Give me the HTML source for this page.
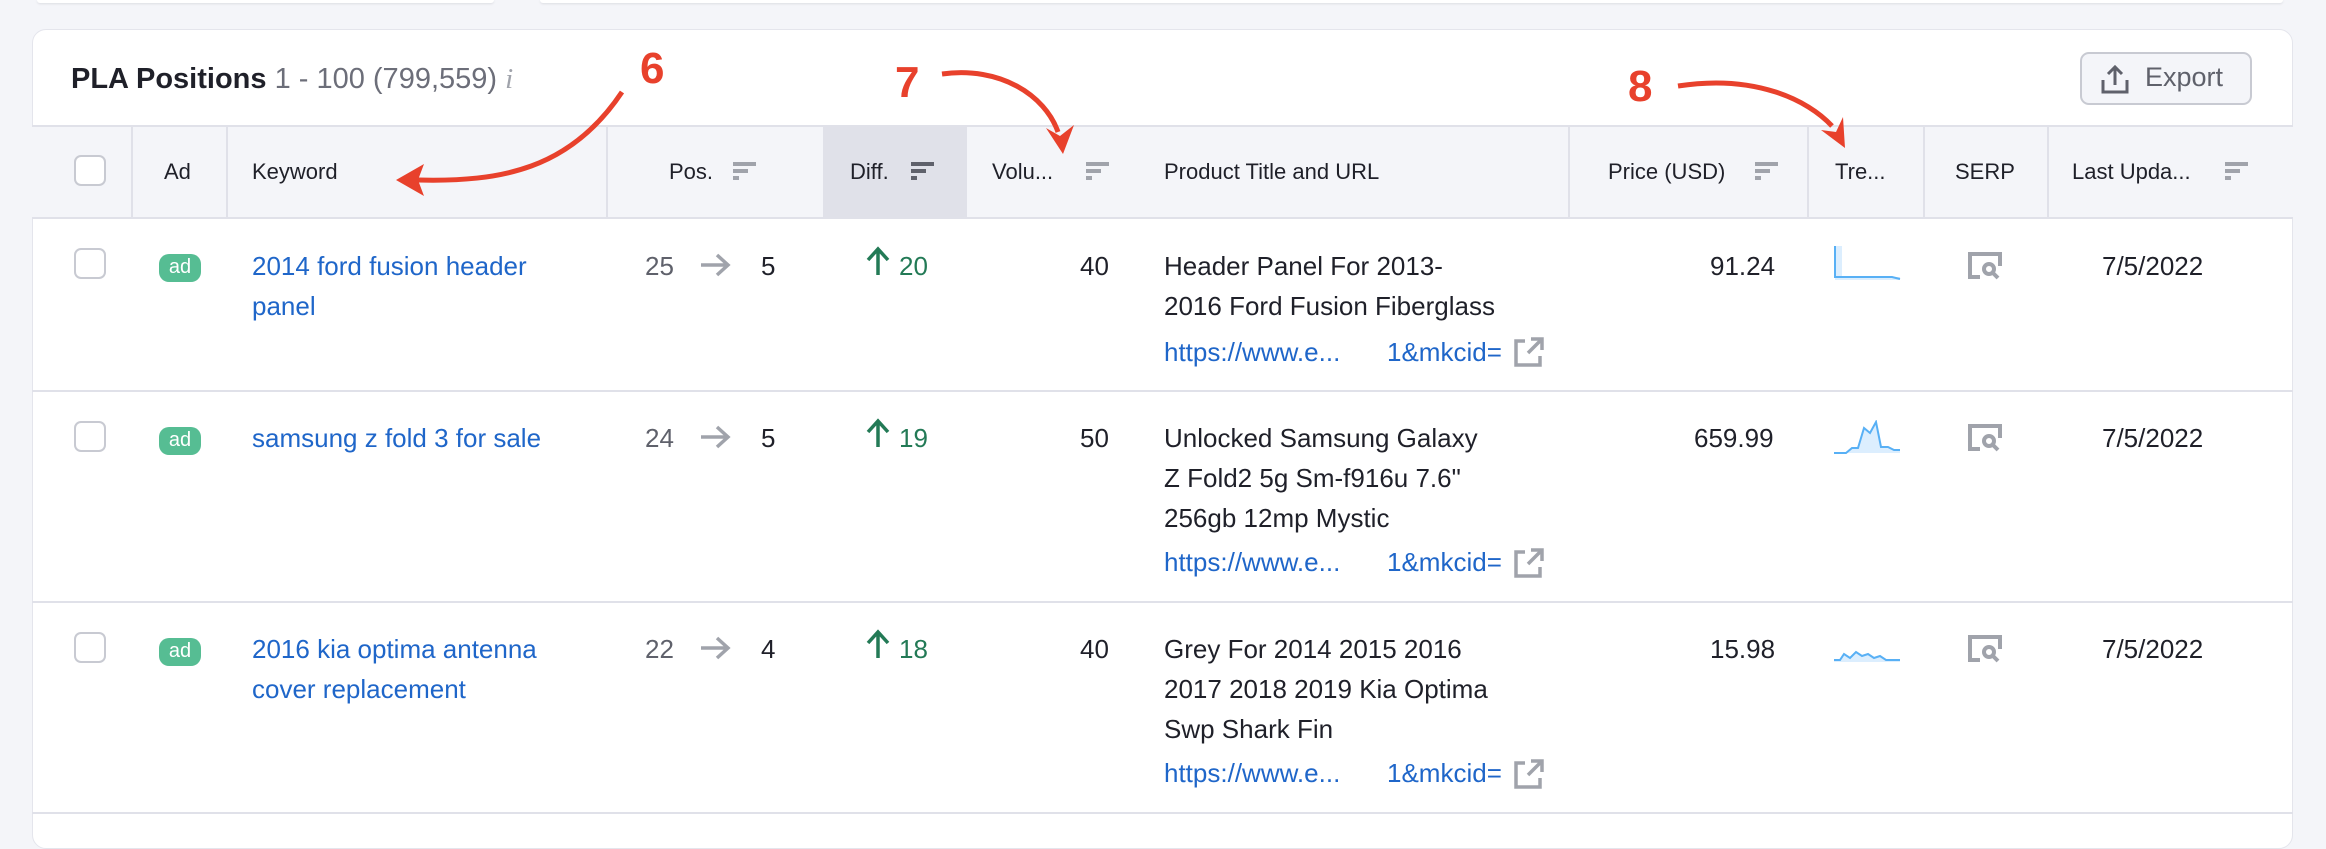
<!DOCTYPE html>
<html><head><meta charset="utf-8"><style>
*{margin:0;padding:0;box-sizing:border-box}
body{width:2326px;height:830px;background:#f4f5f9;position:relative;overflow:hidden;font-family:"Liberation Sans",Arial,sans-serif;color:#1f2029}
.a{position:absolute;white-space:nowrap}
.card{position:absolute;left:32px;top:29px;width:2261px;height:820px;background:#fff;border-radius:14px;border:1px solid #e4e5ec;overflow:hidden}
.hdr{position:absolute;left:32px;top:125px;width:2261px;height:94px;background:#f4f5f9;border-top:2px solid #e0e1e9;border-bottom:2px solid #e0e1e9}
.vl{position:absolute;top:125px;height:94px;width:2px;background:#e0e1e9}
.ht{position:absolute;top:159px;font-size:22px;color:#1f2029;white-space:nowrap}
.hl{position:absolute;left:32px;width:2261px;height:2px;background:#e0e1e9}
.t{position:absolute;font-size:26px;line-height:40px;white-space:nowrap}
.lnk{color:#1f66c9}
.cb{position:absolute;width:32px;height:31px;border:2px solid #c8cad2;border-radius:7px;background:#fff}
.ad{position:absolute;width:42px;height:28px;background:#56bd93;border-radius:10px;color:#fff;font-size:20px;line-height:27px;text-align:center}
.g{color:#5f616b}
.grn{color:#237a56}
.num{position:absolute;font-weight:bold;color:#e8412c;font-size:44px;font-family:"Liberation Sans",sans-serif}
.clip{overflow:hidden;width:116px}
</style></head><body>
<div class="a" style="left:37px;top:0;width:457px;height:3px;background:#fff;border-radius:0 0 6px 6px;box-shadow:0 1px 2px #dcdde3"></div>
<div class="a" style="left:540px;top:0;width:1743px;height:3px;background:#fff;border-radius:0 0 6px 6px;box-shadow:0 1px 2px #dcdde3"></div>
<div class="card"></div>
<div class="a" style="left:71px;top:63px;font-size:29px;font-weight:bold;color:#1f2029">PLA Positions <span style="font-weight:normal;color:#6c6e79">1 - 100 (799,559)</span> <span style="font-weight:normal;color:#a0a3ab;font-style:italic;font-family:'Liberation Serif',serif">i</span></div>
<div class="a" style="left:2080px;top:52px;width:172px;height:53px;border:2px solid #c8cad2;border-radius:9px;background:#f4f5f9"></div>
<svg class="a" style="left:2100px;top:63px" width="30" height="32" viewBox="0 0 30 32"><path d="M15 22V4M8 11l7-7 7 7M3 17v12h24V17" fill="none" stroke="#5f616b" stroke-width="3"/></svg>
<div class="a" style="left:2145px;top:62px;font-size:27px;color:#5f616b">Export</div>

<div class="hdr"></div>
<div class="a" style="left:823px;top:127px;width:144px;height:90px;background:#e0e1e9"></div>
<div class="vl" style="left:131px"></div><div class="vl" style="left:226px"></div><div class="vl" style="left:606px"></div>
<div class="vl" style="left:1568px"></div><div class="vl" style="left:1807px"></div><div class="vl" style="left:1923px"></div><div class="vl" style="left:2047px"></div>
<div class="cb" style="left:74px;top:155px"></div>
<div class="ht" style="left:164px">Ad</div>
<div class="ht" style="left:252px">Keyword</div>
<div class="ht" style="left:669px">Pos.</div>
<div class="ht" style="left:850px">Diff.</div>
<div class="ht" style="left:992px">Volu...</div>
<div class="ht" style="left:1164px">Product Title and URL</div>
<div class="ht" style="left:1608px">Price (USD)</div>
<div class="ht" style="left:1835px">Tre...</div>
<div class="ht" style="left:1955px">SERP</div>
<div class="ht" style="left:2072px">Last Upda...</div>
<svg class="a" style="left:733px;top:161px" width="24" height="20"><path d="M0 3h23M0 10h15M0 17h6" stroke="#a0a3ab" stroke-width="4"/></svg>
<svg class="a" style="left:911px;top:161px" width="24" height="20"><path d="M0 3h23M0 10h15M0 17h6" stroke="#5f616b" stroke-width="4"/></svg>
<svg class="a" style="left:1086px;top:161px" width="24" height="20"><path d="M0 3h23M0 10h15M0 17h6" stroke="#a0a3ab" stroke-width="4"/></svg>
<svg class="a" style="left:1755px;top:161px" width="24" height="20"><path d="M0 3h23M0 10h15M0 17h6" stroke="#a0a3ab" stroke-width="4"/></svg>
<svg class="a" style="left:2225px;top:161px" width="24" height="20"><path d="M0 3h23M0 10h15M0 17h6" stroke="#a0a3ab" stroke-width="4"/></svg>

<div class="hl" style="top:390px"></div>
<div class="hl" style="top:601px"></div>
<div class="hl" style="top:812px"></div>

<!-- row1 -->
<div class="cb" style="left:74px;top:248px"></div>
<div class="ad" style="left:159px;top:254px">ad</div>
<div class="t lnk" style="left:252px;top:246px">2014 ford fusion header<br>panel</div>
<div class="t g" style="left:645px;top:246px">25</div><div class="t" style="left:761px;top:246px">5</div>
<div class="t grn" style="left:899px;top:246px">20</div>
<div class="t" style="left:1080px;top:246px">40</div>
<div class="t" style="left:1164px;top:246px">Header Panel For 2013-<br>2016 Ford Fusion Fiberglass</div>
<div class="t lnk" style="left:1164px;top:332px">https://www.e...</div><div class="t lnk clip" style="left:1387px;top:332px">1&amp;mkcid=</div>
<div class="t" style="left:1710px;top:246px">91.24</div>
<svg class="a" style="left:1834px;top:246px" width="68" height="36"><path d="M1 0V34H66V31H8V0Z" fill="#dceefe"/><path d="M1 0V31H58L66 33" fill="none" stroke="#58b0f5" stroke-width="2"/></svg>
<div class="t" style="left:2102px;top:246px">7/5/2022</div>

<!-- row2 -->
<div class="cb" style="left:74px;top:421px"></div>
<div class="ad" style="left:159px;top:427px">ad</div>
<div class="t lnk" style="left:252px;top:418px">samsung z fold 3 for sale</div>
<div class="t g" style="left:645px;top:418px">24</div><div class="t" style="left:761px;top:418px">5</div>
<div class="t grn" style="left:899px;top:418px">19</div>
<div class="t" style="left:1080px;top:418px">50</div>
<div class="t" style="left:1164px;top:418px">Unlocked Samsung Galaxy<br>Z Fold2 5g Sm-f916u 7.6"<br>256gb 12mp Mystic</div>
<div class="t lnk" style="left:1164px;top:542px">https://www.e...</div><div class="t lnk clip" style="left:1387px;top:542px">1&amp;mkcid=</div>
<div class="t" style="left:1694px;top:418px">659.99</div>
<svg class="a" style="left:1834px;top:420px" width="68" height="36"><path d="M0 33H12L18 28H24L30 8L36 13L42 2L47 27H54L60 30H66V33Z" fill="#dceefe"/><path d="M0 33H12L18 28H24L30 8L36 13L42 2L47 27H54L60 30H66" fill="none" stroke="#58b0f5" stroke-width="2"/></svg>
<div class="t" style="left:2102px;top:418px">7/5/2022</div>

<!-- row3 -->
<div class="cb" style="left:74px;top:632px"></div>
<div class="ad" style="left:159px;top:638px">ad</div>
<div class="t lnk" style="left:252px;top:629px">2016 kia optima antenna<br>cover replacement</div>
<div class="t g" style="left:645px;top:629px">22</div><div class="t" style="left:761px;top:629px">4</div>
<div class="t grn" style="left:899px;top:629px">18</div>
<div class="t" style="left:1080px;top:629px">40</div>
<div class="t" style="left:1164px;top:629px">Grey For 2014 2015 2016<br>2017 2018 2019 Kia Optima<br>Swp Shark Fin</div>
<div class="t lnk" style="left:1164px;top:753px">https://www.e...</div><div class="t lnk clip" style="left:1387px;top:753px">1&amp;mkcid=</div>
<div class="t" style="left:1710px;top:629px">15.98</div>
<svg class="a" style="left:1834px;top:640px" width="68" height="24"><path d="M0 20H6L10 14L16 18L22 12L28 16L34 14L40 18L46 16L52 20H66V22H0Z" fill="#dceefe"/><path d="M0 20H6L10 14L16 18L22 12L28 16L34 14L40 18L46 16L52 20H66" fill="none" stroke="#58b0f5" stroke-width="2"/></svg>
<div class="t" style="left:2102px;top:629px">7/5/2022</div>

<svg class="a" style="left:0;top:0" width="2326" height="830">
<g fill="none" stroke="#a0a3ab" stroke-width="3.5">
<path d="M701 265H727M717 255L728 265L717 275"/>
<path d="M701 437H727M717 427L728 437L717 447"/>
<path d="M701 648H727M717 638L728 648L717 658"/>
</g>
<g fill="none" stroke="#237a56" stroke-width="3.5">
<path d="M878 275V250M868 260L878 249L888 260"/>
<path d="M878 447V422M868 432L878 421L888 432"/>
<path d="M878 658V633M868 643L878 632L888 643"/>
</g>
</svg>

<svg class="a" style="left:1968px;top:252px" width="34" height="28"><g fill="none" stroke="#a0a3ab" stroke-width="4"><path d="M12 25H2V2H32V14"/><circle cx="21" cy="17" r="5"/><path d="M25 21l5 5"/></g></svg>
<svg class="a" style="left:1968px;top:424px" width="34" height="28"><g fill="none" stroke="#a0a3ab" stroke-width="4"><path d="M12 25H2V2H32V14"/><circle cx="21" cy="17" r="5"/><path d="M25 21l5 5"/></g></svg>
<svg class="a" style="left:1968px;top:635px" width="34" height="28"><g fill="none" stroke="#a0a3ab" stroke-width="4"><path d="M12 25H2V2H32V14"/><circle cx="21" cy="17" r="5"/><path d="M25 21l5 5"/></g></svg>
<svg class="a" style="left:1514px;top:337px" width="30" height="30"><g fill="none" stroke="#a0a3ab" stroke-width="3.5"><path d="M11 4H2V28H26V19"/><path d="M14 16L27 3M17 2H28V13"/></g></svg>
<svg class="a" style="left:1514px;top:548px" width="30" height="30"><g fill="none" stroke="#a0a3ab" stroke-width="3.5"><path d="M11 4H2V28H26V19"/><path d="M14 16L27 3M17 2H28V13"/></g></svg>
<svg class="a" style="left:1514px;top:759px" width="30" height="30"><g fill="none" stroke="#a0a3ab" stroke-width="3.5"><path d="M11 4H2V28H26V19"/><path d="M14 16L27 3M17 2H28V13"/></g></svg>

<div class="num" style="left:640px;top:44px">6</div>
<div class="num" style="left:895px;top:58px">7</div>
<div class="num" style="left:1628px;top:62px">8</div>
<svg class="a" style="left:0;top:0" width="2326" height="830">
<g fill="none" stroke="#e8412c" stroke-width="5">
<path d="M622 92C570 170 500 182 418 180"/>
<path d="M942 74C1000 66 1045 95 1058 132"/>
<path d="M1678 86C1755 74 1808 100 1832 126"/>
</g>
<g fill="#e8412c">
<path d="M396 180L424 164L418 180L424 196Z"/>
<path d="M1063 154L1046 128L1060 136L1074 125Z"/>
<path d="M1845 148L1821 130L1836 132L1843 117Z"/>
</g>
</svg>
</body></html>
